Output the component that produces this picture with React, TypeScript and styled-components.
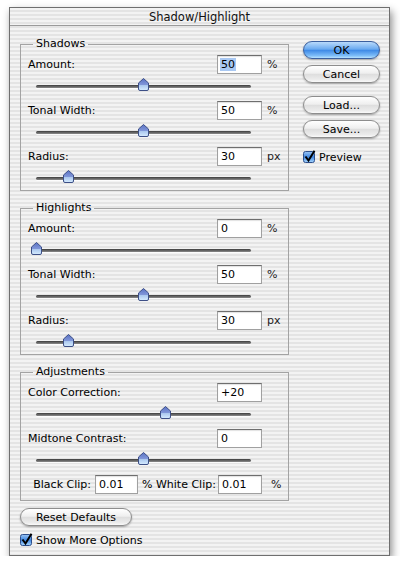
import styled, { createGlobalStyle } from "styled-components";

/* ================= STYLES ================= */

const GlobalStyle = createGlobalStyle`
  html, body {
    margin: 0;
    padding: 0;
    background: #ffffff;
  }
  body {
    font-family: "DejaVu Sans", "Liberation Sans", sans-serif;
    font-size: 11px;
    color: #000;
  }
`;

const pinstripe = `repeating-linear-gradient(
  to bottom,
  #f3f3f3 0px,
  #f3f3f3 2px,
  #e4e4e4 2px,
  #e4e4e4 4px
)`;

const Page = styled.div`
  padding: 7px 0 0 9px;
`;

const Window = styled.div`
  box-sizing: border-box;
  width: 381px;
  height: 549px;
  border: 1px solid #6f6f6f;
  background: ${pinstripe};
  box-shadow: 2px 4px 8px rgba(0, 0, 0, 0.45);
  display: flex;
  flex-direction: column;
`;

const TitleBar = styled.div`
  height: 17px;
  border-bottom: 1px solid #9a9a9a;
  display: flex;
  align-items: center;
  justify-content: center;
  font-size: 11.5px;
  color: #111;
`;

const Body = styled.div`
  display: flex;
  flex: 1;
`;

const Main = styled.div`
  width: 269px;
  padding: 11px 0 0 10px;
  display: flex;
  flex-direction: column;
  gap: 10px;
`;

const Side = styled.div`
  width: 77px;
  margin-left: 14px;
  padding-top: 15px;
  display: flex;
  flex-direction: column;
`;

const Group = styled.fieldset<{ $bottom?: number }>`
  box-sizing: border-box;
  width: 269px;
  margin: 0;
  min-width: 0;
  padding: 4px 0 ${({ $bottom }) => $bottom ?? 0}px 0;
  border: 1px solid #a3a3a3;
  display: flex;
  flex-direction: column;
  gap: 3px;
`;

const Legend = styled.legend`
  margin-left: 12px;
  padding: 0 3px;
  line-height: 14px;
  font-size: 11px;
`;

const ControlHeader = styled.div`
  height: 19px;
  display: grid;
  grid-template-columns: 1fr 45px 26px;
  align-items: center;
  padding-left: 7px;
`;

const Field = styled.div<{ $width?: number }>`
  box-sizing: border-box;
  width: ${({ $width }) => $width ?? 45}px;
  height: 19px;
  background: #fff;
  border: 1px solid #a0a0a0;
  border-top-color: #6e6e6e;
  box-shadow: inset 0 1px 1px rgba(0, 0, 0, 0.12);
  padding: 0 3px;
  display: flex;
  align-items: center;
  font-size: 11px;
`;

const Selected = styled.span`
  background: #a9c8f2;
  padding: 0 1px;
  margin-left: -1px;
`;

const Unit = styled.span`
  padding-left: 5px;
  color: #222;
`;

const SliderRow = styled.div`
  height: 24px;
  padding-left: 15px;
  display: flex;
  align-items: center;
`;

const Track = styled.div`
  position: relative;
  width: 215px;
  height: 3px;
  border-radius: 2px;
  background: linear-gradient(to bottom, #3c3c3c, #8c8c8c);
  box-shadow: 0 1px 0 rgba(255, 255, 255, 0.8);
`;

const ThumbMark = styled.svg`
  position: absolute;
  top: -7px;
  width: 11px;
  height: 13px;
`;

const ClipRow = styled.div`
  height: 19px;
  display: grid;
  grid-template-columns: 63px 43px 72px 44px auto;
  column-gap: 4px;
  align-items: center;
  padding-left: 7px;
`;

const ClipLabel = styled.span<{ $right?: boolean }>`
  text-align: ${({ $right }) => ($right ? "right" : "left")};
  white-space: nowrap;
`;

const AquaButton = styled.div<{ $primary?: boolean; $width?: number; $gap?: number }>`
  box-sizing: border-box;
  width: ${({ $width }) => $width ?? 77}px;
  height: 18px;
  margin-top: ${({ $gap }) => $gap ?? 0}px;
  border-radius: 9px;
  display: flex;
  align-items: center;
  justify-content: center;
  font-size: 11px;
  color: #000;
  border: 1px solid ${({ $primary }) => ($primary ? "#3b5f9e" : "#8d8d8d")};
  background: ${({ $primary }) =>
    $primary
      ? "linear-gradient(to bottom, #b9dafb 0%, #6aaaf0 45%, #3f8ae6 52%, #7cbcf8 85%, #b8e2ff 100%)"
      : "linear-gradient(to bottom, #ffffff 0%, #efefef 45%, #dedede 52%, #ececec 85%, #fafafa 100%)"};
  box-shadow: 0 1px 2px rgba(0, 0, 0, 0.3);
`;

const CheckRow = styled.div<{ $gap?: number }>`
  margin-top: ${({ $gap }) => $gap ?? 0}px;
  display: flex;
  align-items: center;
  gap: 2px;
  height: 14px;
`;

const CheckMark = styled.svg`
  width: 14px;
  height: 14px;
  flex: none;
`;

/* ================= COMPONENTS ================= */

const Thumb = ({ at }: { at: number }) => (
  <ThumbMark viewBox="0 0 11 13" style={{ left: at * 215 - 5.5 }}>
    <defs>
      <linearGradient id="thumbFill" x1="0" y1="0" x2="0" y2="1">
        <stop offset="0" stopColor="#5a72c4" />
        <stop offset="0.5" stopColor="#7f95d8" />
        <stop offset="0.55" stopColor="#a9c6ee" />
        <stop offset="1" stopColor="#d6ecff" />
      </linearGradient>
    </defs>
    <path
      d="M5.5 0.5 L10.5 5 L10.5 11 Q10.5 12.5 9 12.5 L2 12.5 Q0.5 12.5 0.5 11 L0.5 5 Z"
      fill="url(#thumbFill)"
      stroke="#3d4f86"
      strokeWidth="1"
    />
  </ThumbMark>
);

const Checkbox = () => (
  <CheckMark viewBox="0 0 14 14">
    <defs>
      <linearGradient id="boxFill" x1="0" y1="0" x2="0" y2="1">
        <stop offset="0" stopColor="#9cc6f4" />
        <stop offset="0.5" stopColor="#3f86e0" />
        <stop offset="1" stopColor="#a9d8ff" />
      </linearGradient>
    </defs>
    <rect x="0.5" y="1.5" width="11" height="11" rx="2" fill="url(#boxFill)" stroke="#2d4f8c" />
    <path d="M2.5 6.5 L5.5 10.5 L11.5 0.8" fill="none" stroke="#000" strokeWidth="2" />
  </CheckMark>
);

type ControlProps = {
  label: string;
  value: string;
  unit?: string;
  at: number;
  selected?: boolean;
};

const Control = ({ label, value, unit, at, selected }: ControlProps) => (
  <div>
    <ControlHeader>
      <span>{label}</span>
      <Field>{selected ? <Selected>{value}</Selected> : value}</Field>
      <Unit>{unit}</Unit>
    </ControlHeader>
    <SliderRow>
      <Track>
        <Thumb at={at} />
      </Track>
    </SliderRow>
  </div>
);

const App = () => {
  return (
    <Page>
      <GlobalStyle />
      <Window>
        <TitleBar>Shadow/Highlight</TitleBar>
        <Body>
          <Main>
            <Group>
              <Legend>Shadows</Legend>
              <Control label="Amount:" value="50" unit="%" at={0.5} selected />
              <Control label="Tonal Width:" value="50" unit="%" at={0.5} />
              <Control label="Radius:" value="30" unit="px" at={0.149} />
            </Group>

            <Group>
              <Legend>Highlights</Legend>
              <Control label="Amount:" value="0" unit="%" at={0} />
              <Control label="Tonal Width:" value="50" unit="%" at={0.5} />
              <Control label="Radius:" value="30" unit="px" at={0.149} />
            </Group>

            <Group $bottom={6}>
              <Legend>Adjustments</Legend>
              <Control label="Color Correction:" value="+20" at={0.6} />
              <Control label="Midtone Contrast:" value="0" at={0.5} />
              <ClipRow>
                <ClipLabel $right>Black Clip:</ClipLabel>
                <Field $width={43}>0.01</Field>
                <ClipLabel>% White Clip:</ClipLabel>
                <Field $width={44}>0.01</Field>
                <Unit>%</Unit>
              </ClipRow>
            </Group>

            <div>
              <AquaButton $width={112} $gap={-3}>
                Reset Defaults
              </AquaButton>
              <CheckRow $gap={7}>
                <Checkbox />
                <span>Show More Options</span>
              </CheckRow>
            </div>
          </Main>

          <Side>
            <AquaButton $primary>OK</AquaButton>
            <AquaButton $gap={6}>Cancel</AquaButton>
            <AquaButton $gap={13}>Load...</AquaButton>
            <AquaButton $gap={6}>Save...</AquaButton>
            <CheckRow $gap={12}>
              <Checkbox />
              <span>Preview</span>
            </CheckRow>
          </Side>
        </Body>
      </Window>
    </Page>
  );
};

export default App;
